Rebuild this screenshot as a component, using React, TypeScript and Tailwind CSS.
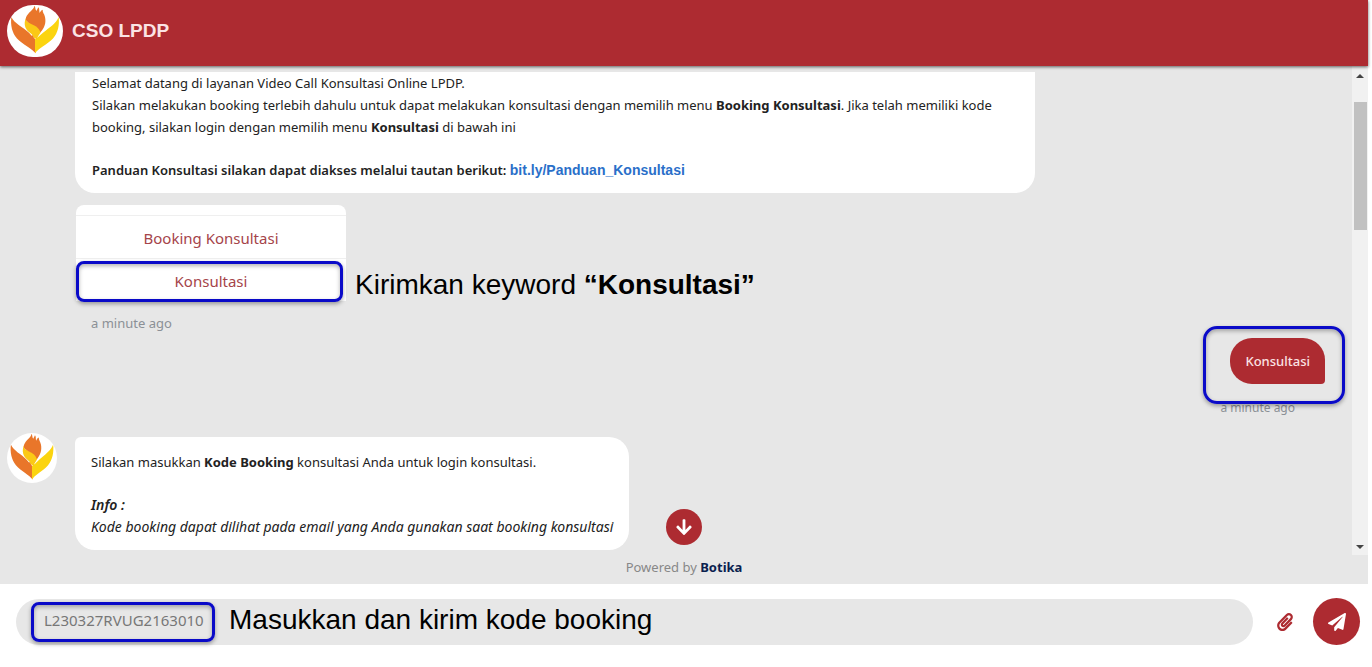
import React, { useState, FormEvent } from "react";
import { FaArrowDown, FaPaperclip, FaPaperPlane } from "react-icons/fa";

const FlameLogo = ({ className }: { className: string }) => (
  <svg
    viewBox="0 0 168 157"
    preserveAspectRatio="none"
    className={className}
    role="img"
    aria-label="LPDP"
  >
    {/* wings */}
    <path
      fill="#e9762a"
      d="M13 36 C22 56 48 66 66 84 L74 93 L80 90 V97 L86 106 V146 C76 132 48 120 30 101 C15 84 10 60 13 36Z"
    />
    <path
      fill="#fbd40f"
      d="M155 36 C148 56 126 68 108 84 C98 93 92 99 84 104 V146 C92 132 120 120 138 101 C153 84 158 60 155 36Z"
    />
    {/* centre flame */}
    <path
      fill="#fbc916"
      d="M56 40 C50 58 54 70 64 80 C72 87 78 90 80 98 L90 104 C91 94 100 88 103 78 C100 68 80 58 60 50Z"
    />
    <path
      fill="#e9762a"
      d="M82 2 C82 14 62 22 57 38 C54 48 62 52 74 58 C88 64 96 70 100 82 C112 70 118 54 114 36 C112 26 106 22 107 14 C102 16 100 20 98 24 C96 18 98 10 94 7 C92 12 90 14 88 18 C84 12 86 6 82 2Z"
    />
  </svg>
);

const markerCls =
  "pointer-events-none absolute border-3 border-[#0a0ac8] shadow-[0_2px_4px_rgba(0,0,0,0.35),inset_0_2px_4px_rgba(0,0,0,0.3)]";

const noteCls =
  "font-['Liberation_Sans',Arial,sans-serif] text-[28px] leading-8 text-black";

const Header = () => (
  <header className="relative z-10 flex h-[66px] shrink-0 items-center gap-[9px] bg-[#ad2b31] px-[7px] pb-1 shadow-[0_1px_3px_rgba(0,0,0,0.6)]">
    <FlameLogo className="h-[52px] w-14 rounded-full bg-white" />
    <h1 className="font-['Liberation_Sans',Arial,sans-serif] text-[19px] font-bold text-[#fbe3e4]">
      CSO LPDP
    </h1>
  </header>
);

const Scrollbar = () => (
  <div
    className="flex w-4 shrink-0 flex-col items-center bg-[#f1f1f1] pt-2 pb-[6px]"
    aria-hidden="true"
  >
    <span className="border-x-4 border-b-4 border-x-transparent border-b-[#444]" />
    <span className="mt-6 h-32 w-[13px] bg-[#c1c1c1]" />
    <span className="mt-auto border-x-4 border-t-4 border-x-transparent border-t-[#444]" />
  </div>
);

const WelcomeMessage = () => (
  <div className="ml-[75px] w-[960px] max-w-[90%] rounded-b-[20px] bg-white px-[17px] pb-3 text-[13px]">
    <p>Selamat datang di layanan Video Call Konsultasi Online LPDP.</p>
    <p>
      Silakan melakukan booking terlebih dahulu untuk dapat melakukan konsultasi
      dengan memilih menu <b>Booking Konsultasi</b>. Jika telah memiliki kode
      booking, silakan login dengan memilih menu <b>Konsultasi</b> di bawah ini
    </p>
    <p className="mt-[21px] font-semibold">
      Panduan Konsultasi silakan dapat diakses melalui tautan berikut:{" "}
      <a
        href="#panduan"
        className="font-['Liberation_Sans',Arial,sans-serif] text-sm text-[#2a6fc9]"
      >
        bit.ly/Panduan_Konsultasi
      </a>
    </p>
  </div>
);

const Menu = () => {
  const itemCls =
    "block h-[43px] w-full border-t border-[#efefef] pt-px text-center text-[15px] text-[#a5444a]";

  return (
    <div className="mt-3 ml-[76px] flex items-end">
      <div className="relative w-[270px] rounded-t-lg bg-white pt-[10px]">
        <button type="button" className={itemCls}>
          Booking Konsultasi
        </button>
        <button type="button" className={itemCls}>
          Konsultasi
        </button>
        <span className={markerCls + " -bottom-px left-0 h-[41px] w-[267px] rounded-lg"} />
      </div>
      <p className={noteCls + " ml-[9px]"}>
        Kirimkan keyword <b>“Konsultasi”</b>
      </p>
    </div>
  );
};

const UserMessage = () => (
  <div className="mt-1 flex flex-col items-end pr-[27px]">
    <div className="relative rounded-[22px] rounded-br-sm bg-[#ad2b31] px-[15px] py-3 text-[13px] font-medium text-[#fbe3e4]">
      Konsultasi
      <span className={markerCls + " -top-3 -right-5 -bottom-5 -left-[27px] rounded-[14px]"} />
    </div>
    <time className="mt-4 mr-[30px] text-xs text-[#8b9096]">a minute ago</time>
  </div>
);

const BookingPrompt = () => (
  <div className="mt-[17px] flex items-start gap-[18px] pl-[7px]">
    <FlameLogo className="size-[50px] shrink-0 rounded-full bg-white" />
    <div className="mt-1 rounded-[20px] rounded-tl-md bg-white px-4 pt-[14px] pb-3 text-[13px]">
      <p>
        Silakan masukkan <b>Kode Booking</b> konsultasi Anda untuk login
        konsultasi.
      </p>
      <p className="mt-[21px] text-sm/[22px] font-semibold italic">Info :</p>
      <p className="text-sm/[22px] italic">
        Kode booking dapat dilihat pada email yang Anda gunakan saat booking
        konsultasi
      </p>
    </div>
  </div>
);

const MessageForm = () => {
  const [code, setCode] = useState("L230327RVUG2163010");

  const handleSubmit = (e: FormEvent<HTMLFormElement>) => {
    e.preventDefault();
    setCode("");
  };

  return (
    <form
      onSubmit={handleSubmit}
      className="flex shrink-0 items-center bg-white pt-[14px] pr-2 pb-5 pl-4"
    >
      <div className="flex h-[46px] grow items-center rounded-full bg-[#e7e7e7] pl-[15px]">
        <div className="relative">
          <input
            type="text"
            aria-label="Kode booking"
            value={code}
            onChange={(e) => setCode(e.target.value)}
            className="block h-10 w-[184px] bg-transparent pr-1 pb-1 pl-[13px] text-[15px] text-[#777] outline-none"
          />
          <span className={markerCls + " inset-0 rounded-lg"} />
        </div>
        <p className={noteCls + " ml-[14px] pb-1"}>
          Masukkan dan kirim kode booking
        </p>
      </div>
      <button
        type="button"
        aria-label="Lampirkan berkas"
        className="mr-[19px] ml-[23px] text-lg text-[#ad2b31]"
      >
        <FaPaperclip />
      </button>
      <button
        type="submit"
        aria-label="Kirim"
        className="flex size-[47px] items-center justify-center rounded-full bg-[#ad2b31] text-lg text-white"
      >
        <FaPaperPlane />
      </button>
    </form>
  );
};

const App = () => {
  return (
    <div className="min-h-screen bg-white pr-1 font-['Noto_Sans','Segoe_UI',sans-serif]">
      <Header />
      <div className="bg-[#e7e7e7]">
        <main className="flex">
          <div className="min-w-0 grow pt-[6px] pb-[5px] leading-[22px] text-[#222]">
            <WelcomeMessage />
            <Menu />
            <time className="mt-[11px] ml-[91px] block text-[13px] text-[#8b9096]">
              a minute ago
            </time>
            <UserMessage />
            <BookingPrompt />
          </div>
          <Scrollbar />
        </main>
        <footer className="relative pt-px pb-[6px] text-center text-[13px] leading-[22px] text-[#888]">
          Powered by <b className="text-[#0b1f4f]">Botika</b>
          <button
            type="button"
            aria-label="Gulir ke bawah"
            className="absolute bottom-full left-1/2 mb-[10px] flex size-9 -translate-x-1/2 items-center justify-center rounded-full bg-[#ad2b31] text-lg text-white"
          >
            <FaArrowDown />
          </button>
        </footer>
      </div>
      <MessageForm />
    </div>
  );
};

export default App;
